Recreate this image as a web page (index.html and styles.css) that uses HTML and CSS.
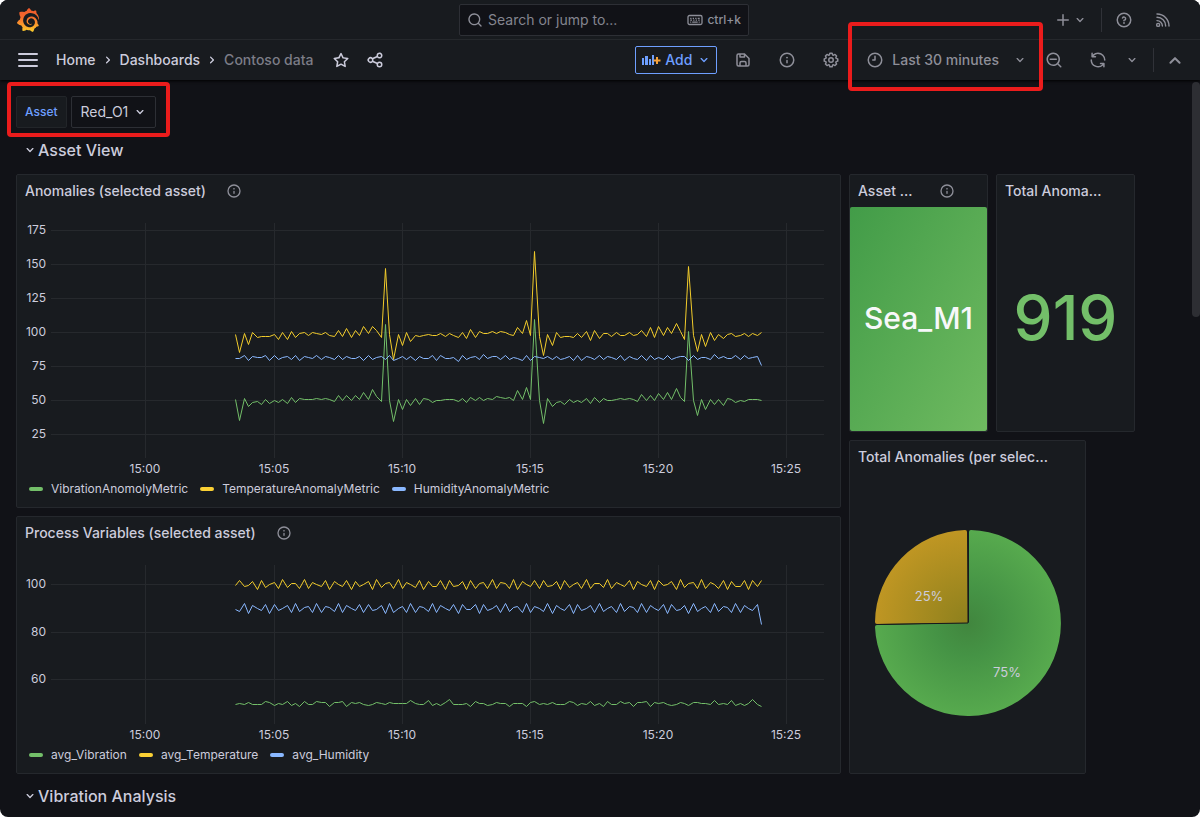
FILE: index.html
```html
<!DOCTYPE html>
<html lang="en">
<head>
<meta charset="utf-8">
<meta name="viewport" content="width=device-width, initial-scale=1">
<title>Contoso data - Dashboards - Grafana</title>
<link rel="stylesheet" href="styles.css">
</head>
<body>
<svg class="sprite" aria-hidden="true">
  <symbol id="i-down" viewBox="0 0 24 24"><path d="M17,9.17a1,1,0,0,0-1.41,0L12,12.71,8.46,9.17a1,1,0,0,0-1.41,0,1,1,0,0,0,0,1.42l4.24,4.24a1,1,0,0,0,1.42,0L17,10.59A1,1,0,0,0,17,9.17Z"/></symbol>
  <symbol id="i-right" viewBox="0 0 24 24"><path transform="rotate(-90 12 12)" d="M17,9.17a1,1,0,0,0-1.41,0L12,12.71,8.46,9.17a1,1,0,0,0-1.41,0,1,1,0,0,0,0,1.42l4.24,4.24a1,1,0,0,0,1.42,0L17,10.59A1,1,0,0,0,17,9.17Z"/></symbol>
  <symbol id="i-up" viewBox="0 0 24 24"><path d="M7 15 L12 10 L17 15" fill="none" stroke="currentColor" stroke-width="2.2" stroke-linecap="round" stroke-linejoin="round"/></symbol>
  <symbol id="i-info" viewBox="0 0 24 24"><path d="M12,2A10,10,0,1,0,22,12,10,10,0,0,0,12,2Zm0,18a8,8,0,1,1,8-8A8,8,0,0,1,12,20Zm0-8.500a1,1,0,0,0-1,1v3a1,1,0,0,0,2,0v-3A1,1,0,0,0,12,11.500Zm0-4a1.250,1.250,0,1,0,1.250,1.250A1.250,1.250,0,0,0,12,7.500Z"/></symbol>
</svg>

<div class="app">
  <header class="chrome">
    <div class="topbar">
      <a class="logo" href="#" aria-label="Grafana home">
        <svg width="24" height="24" viewBox="0 0 24 24" aria-hidden="true">
          <defs><linearGradient id="logo-fill" x1="0" y1="24" x2="0" y2="0" gradientUnits="userSpaceOnUse"><stop offset="0" stop-color="#fcd02b"/><stop offset=".3" stop-color="#fa9b2c"/><stop offset=".65" stop-color="#f4672d"/><stop offset="1" stop-color="#f05a2b"/></linearGradient></defs>
          <path fill="url(#logo-fill)" d="M23.02 10.59a8.578 8.578 0 0 0-.862-3.034 8.911 8.911 0 0 0-1.789-2.445c.337-1.342-.413-2.505-.413-2.505-1.292-.08-2.113.4-2.416.62-.052-.02-.102-.044-.154-.064-.22-.089-.446-.172-.677-.247-.231-.073-.47-.14-.711-.197a9.867 9.867 0 0 0-.875-.161C14.557.753 12.94 0 12.94 0c-1.804 1.145-2.147 2.744-2.147 2.744l-.018.093c-.098.029-.2.057-.298.088-.138.042-.275.094-.413.143-.138.055-.275.107-.41.166a8.869 8.869 0 0 0-1.557.87l-.063-.029c-2.497-.955-4.716.195-4.716.195-.203 2.658.996 4.33 1.235 4.636a11.608 11.608 0 0 0-.607 2.635C1.636 12.677.953 15.014.953 15.014c1.926 2.214 4.171 2.351 4.171 2.351.003-.002.006-.002.006-.005.285.509.615.994.986 1.446.156.19.32.371.488.548-.704 2.009.099 3.68.099 3.68 2.144.08 3.553-.937 3.849-1.173a9.784 9.784 0 0 0 3.164.501h.08l.055-.003.107-.002.103-.005.003.002c1.01 1.44 2.788 1.646 2.788 1.646 1.264-1.332 1.337-2.653 1.337-2.94v-.058c0-.02-.003-.039-.003-.06.265-.187.52-.387.758-.6a7.875 7.875 0 0 0 1.415-1.7c1.43.083 2.437-.885 2.437-.885-.236-1.49-1.085-2.216-1.264-2.354l-.018-.013-.016-.013a.217.217 0 0 1-.031-.02c.008-.092.016-.18.02-.27.011-.162.016-.323.016-.48v-.253l-.005-.098-.008-.135a1.891 1.891 0 0 0-.01-.13c-.003-.042-.008-.083-.013-.125l-.016-.124-.018-.122a6.215 6.215 0 0 0-2.032-3.73 6.015 6.015 0 0 0-3.222-1.46 6.292 6.292 0 0 0-.85-.048l-.107.002h-.063l-.044.003-.104.008a4.777 4.777 0 0 0-3.335 1.695c-.332.4-.592.84-.768 1.297a4.594 4.594 0 0 0-.312 1.817l.003.091c.005.055.007.11.013.164a3.615 3.615 0 0 0 .698 1.82 3.53 3.53 0 0 0 1.827 1.282c.33.098.66.14.971.137.039 0 .078 0 .114-.002l.063-.003c.02 0 .041-.003.062-.003.034-.002.065-.007.099-.01.007 0 .018-.003.028-.003l.031-.005.06-.008a1.18 1.18 0 0 0 .112-.02c.036-.008.072-.013.109-.024a2.634 2.634 0 0 0 .914-.415c.028-.02.056-.041.085-.065a.248.248 0 0 0 .039-.35.244.244 0 0 0-.309-.06l-.078.042c-.09.044-.184.083-.283.116a2.476 2.476 0 0 1-.475.096c-.028.003-.054.006-.083.006l-.083.002c-.026 0-.054 0-.08-.002l-.102-.006h-.012l-.024.006c-.016-.003-.031-.003-.044-.006-.031-.002-.06-.007-.091-.01a2.59 2.59 0 0 1-.724-.213 2.557 2.557 0 0 1-.667-.438 2.52 2.52 0 0 1-.805-1.475 2.306 2.306 0 0 1-.029-.444l.006-.122v-.023l.002-.031c.003-.021.003-.04.005-.06a3.163 3.163 0 0 1 1.352-2.29 3.12 3.12 0 0 1 .937-.43 2.946 2.946 0 0 1 .776-.101h.06l.07.002.045.003h.026l.07.005a4.041 4.041 0 0 1 1.635.49 3.94 3.94 0 0 1 1.602 1.662 3.77 3.77 0 0 1 .397 1.414l.005.076.003.075c.002.026.002.05.002.075 0 .024.003.052 0 .07v.065l-.002.073-.008.174a6.195 6.195 0 0 1-.08.639 5.1 5.1 0 0 1-.267.927 5.31 5.31 0 0 1-.624 1.13 5.052 5.052 0 0 1-3.237 2.014 4.82 4.82 0 0 1-.649.066l-.039.003h-.287a6.607 6.607 0 0 1-1.716-.265 6.776 6.776 0 0 1-3.4-2.274 6.75 6.75 0 0 1-.746-1.15 6.616 6.616 0 0 1-.714-2.596l-.005-.083-.002-.02v-.056l-.003-.073v-.096l-.003-.104v-.07l.003-.163c.008-.22.026-.45.054-.678a8.707 8.707 0 0 1 .28-1.355c.128-.444.286-.872.473-1.277a7.04 7.04 0 0 1 1.456-2.1 5.925 5.925 0 0 1 .953-.763c.169-.111.343-.213.524-.306.089-.05.182-.091.273-.135.047-.02.093-.042.138-.062a7.177 7.177 0 0 1 .714-.267l.145-.045c.049-.015.098-.026.148-.041.098-.029.197-.052.296-.076.049-.013.1-.02.15-.033l.15-.032.151-.028.076-.013.075-.01.153-.024c.057-.01.114-.013.171-.023l.169-.021c.036-.003.073-.008.106-.01l.073-.008.036-.003.042-.002c.057-.003.114-.008.171-.01l.086-.006h.023l.037-.003.145-.007a7.999 7.999 0 0 1 1.708.125 7.917 7.917 0 0 1 2.048.68 8.253 8.253 0 0 1 1.672 1.09l.09.077.089.078c.06.052.114.107.171.159.057.052.112.106.166.16.052.055.107.107.159.164a8.671 8.671 0 0 1 1.41 1.978c.012.026.028.052.04.078l.04.078.075.156c.023.051.05.1.07.153l.065.15a8.848 8.848 0 0 1 .45 1.34.19.19 0 0 0 .201.142.186.186 0 0 0 .172-.184c.01-.246.002-.532-.024-.856z"/>
        </svg>
      </a>
      <label class="search">
        <svg class="icon" viewBox="0 0 24 24" aria-hidden="true"><path d="M21.710,20.290,18,16.610A9,9,0,1,0,16.610,18l3.680,3.680a1,1,0,0,0,1.420,0A1,1,0,0,0,21.710,20.290ZM11,18a7,7,0,1,1,7-7A7,7,0,0,1,11,18Z"/></svg>
        <input class="search-input" type="text" placeholder="Search or jump to..." aria-label="Search or jump to">
        <svg class="icon" viewBox="0 0 16 16" aria-hidden="true"><g fill="none" stroke="currentColor"><rect x="1" y="3.500" width="14" height="9" rx="1.500" stroke-width="1.300"/><path d="M3.200 6.300h1.300M5.700 6.300H7M8.200 6.300h1.300M10.700 6.300h2M3.200 8.200h1.800M6.200 8.200h1.300M8.700 8.200H10M11.200 8.200h1.500M3.200 10.200h1M5.200 10.200h5.500M11.700 10.200h1" stroke-width="1.200"/></g></svg>
        <kbd class="kbd">ctrl+k</kbd>
      </label>
      <div class="top-actions">
        <button class="new-button" type="button" aria-label="New">
          <svg class="icon icon-md" viewBox="0 0 24 24" aria-hidden="true"><path d="M19,11H13V5a1,1,0,0,0-2,0v6H5a1,1,0,0,0,0,2h6v6a1,1,0,0,0,2,0V13h6a1,1,0,0,0,0-2Z"/></svg>
          <svg class="icon" viewBox="0 0 24 24" aria-hidden="true"><use href="#i-down"/></svg>
        </button>
        <span class="divider"></span>
        <button class="top-button" type="button" aria-label="Help"><svg class="icon icon-md" viewBox="0 0 24 24" aria-hidden="true"><g fill="none" stroke="currentColor" stroke-width="2" stroke-linecap="round"><circle cx="12" cy="12" r="9"/><path d="M10 9.300a2.200 2.200 0 1 1 2 3.200v.5"/></g><circle cx="12" cy="16" r="1.200"/></svg></button>
        <button class="top-button" type="button" aria-label="News"><svg class="icon icon-md" viewBox="0 0 24 24" aria-hidden="true"><g fill="none" stroke="currentColor" stroke-width="1.900" stroke-linecap="round"><circle cx="5.500" cy="18.500" r="2"/><path d="M4 12.800A7.300 7.300 0 0 1 11.200 20M4 8.400A11.600 11.600 0 0 1 15.600 20M4 4A16 16 0 0 1 20 20"/></g></svg></button>
      </div>
    </div>

    <div class="toolbar">
      <button class="menu-button" type="button" aria-label="Open menu"><span></span><span></span><span></span></button>
      <nav class="crumbs" aria-label="Breadcrumbs">
        <a href="#">Home</a>
        <svg class="icon" viewBox="0 0 24 24" aria-hidden="true"><use href="#i-right"/></svg>
        <a href="#">Dashboards</a>
        <svg class="icon" viewBox="0 0 24 24" aria-hidden="true"><use href="#i-right"/></svg>
        <span class="crumb-current">Contoso data</span>
      </nav>
      <div class="crumb-actions">
        <button class="plain-button" type="button" aria-label="Mark as favorite"><svg class="icon icon-md" viewBox="0 0 24 24" aria-hidden="true"><path d="M22,9.67A1,1,0,0,0,21.14,9l-5.69-.83L12.9,3a1,1,0,0,0-1.8,0L8.55,8.16,2.86,9a1,1,0,0,0-.81.68,1,1,0,0,0,.25,1l4.13,4-1,5.68A1,1,0,0,0,6.9,21.44L12,18.77l5.1,2.67a.93.93,0,0,0,.46.12,1,1,0,0,0,.59-.19,1,1,0,0,0,.4-1l-1-5.68,4.13-4A1,1,0,0,0,22,9.67Zm-6.15,4a1,1,0,0,0-.29.88l.72,4.2-3.76-2a1.06,1.06,0,0,0-.94,0l-3.76,2,.72-4.2a1,1,0,0,0-.29-.88l-3-3,4.21-.61a1,1,0,0,0,.76-.55L12,5.7l1.88,3.82a1,1,0,0,0,.76.55l4.21.61Z"/></svg></button>
        <button class="plain-button" type="button" aria-label="Share dashboard"><svg class="icon icon-md" viewBox="0 0 24 24" aria-hidden="true"><path d="M18,14a4,4,0,0,0-3.08,1.48l-5.1-2.35a3.64,3.64,0,0,0,0-2.26l5.1-2.35A4,4,0,1,0,14,6a4.17,4.17,0,0,0,.07.71L8.79,9.14a4,4,0,1,0,0,5.72l5.28,2.43A4.17,4.17,0,0,0,14,18a4,4,0,1,0,4-4ZM18,4a2,2,0,1,1-2,2A2,2,0,0,1,18,4ZM6,14a2,2,0,1,1,2-2A2,2,0,0,1,6,14Zm12,6a2,2,0,1,1,2-2A2,2,0,0,1,18,20Z"/></svg></button>
      </div>

      <div class="tools">
        <button class="add-button" type="button">
          <svg width="20" height="16" viewBox="0 0 20 16" aria-hidden="true"><g fill="#6e9fff"><rect x="1" y="6" width="2" height="7"/><rect x="4" y="4" width="3" height="9"/><rect x="8" y="7" width="2" height="6"/><rect x="11" y="3" width="2" height="10"/></g><path d="M16 5v7M12.500 8.500h7" stroke="#f5a13a" stroke-width="2" fill="none"/></svg>
          <span>Add</span>
          <svg class="icon" viewBox="0 0 24 24" aria-hidden="true"><use href="#i-down"/></svg>
        </button>
        <button class="tool-button" type="button" aria-label="Save dashboard"><svg class="icon icon-md" viewBox="0 0 24 24" aria-hidden="true"><path d="M20.71,9.29l-6-6a1,1,0,0,0-.32-.21A1.09,1.09,0,0,0,14,3H6A3,3,0,0,0,3,6V18a3,3,0,0,0,3,3H18a3,3,0,0,0,3-3V10A1,1,0,0,0,20.71,9.29ZM9,5h4V7H9Zm6,14H9V16a1,1,0,0,1,1-1h4a1,1,0,0,1,1,1Zm4-1a1,1,0,0,1-1,1H17V16a3,3,0,0,0-3-3H10a3,3,0,0,0-3,3v3H6a1,1,0,0,1-1-1V6A1,1,0,0,1,6,5H7V8A1,1,0,0,0,8,9h6a1,1,0,0,0,1-1V6.41l4,4Z"/></svg></button>
        <button class="tool-button" type="button" aria-label="Dashboard insights"><svg class="icon icon-md" viewBox="0 0 24 24" aria-hidden="true"><use href="#i-info"/></svg></button>
        <button class="tool-button" type="button" aria-label="Dashboard settings"><svg class="icon icon-md" viewBox="0 0 24 24" aria-hidden="true"><path d="M21.32,9.55l-1.89-.63.89-1.78A1,1,0,0,0,20.13,6L18,3.87a1,1,0,0,0-1.15-.19l-1.78.89-.63-1.89A1,1,0,0,0,13.5,2h-3a1,1,0,0,0-.95.68L8.92,4.57,7.14,3.68A1,1,0,0,0,6,3.87L3.87,6a1,1,0,0,0-.19,1.15l.89,1.78-1.89.63A1,1,0,0,0,2,10.5v3a1,1,0,0,0,.68.95l1.89.63-.89,1.78A1,1,0,0,0,3.87,18L6,20.13a1,1,0,0,0,1.15.19l1.78-.89.63,1.89a1,1,0,0,0,.95.68h3a1,1,0,0,0,.95-.68l.63-1.89,1.78.89A1,1,0,0,0,18,20.13L20.13,18a1,1,0,0,0,.19-1.15l-.89-1.78,1.89-.63A1,1,0,0,0,22,13.5v-3A1,1,0,0,0,21.32,9.55ZM20,12.78l-1.2.4A2,2,0,0,0,17.64,16l.57,1.14-1.1,1.1L16,17.64a2,2,0,0,0-2.79,1.16l-.4,1.2H11.22l-.4-1.2A2,2,0,0,0,8,17.64l-1.14.57-1.1-1.1L6.36,16A2,2,0,0,0,5.2,13.18L4,12.78V11.22l1.2-.4A2,2,0,0,0,6.36,8L5.79,6.89l1.1-1.1L8,6.36A2,2,0,0,0,10.82,5.2l.4-1.2h1.56l.4,1.2A2,2,0,0,0,16,6.36l1.14-.57,1.1,1.1L17.64,8a2,2,0,0,0,1.16,2.79l1.2.4ZM12,8a4,4,0,1,0,4,4A4,4,0,0,0,12,8Zm0,6a2,2,0,1,1,2-2A2,2,0,0,1,12,14Z"/></svg></button>
        <div class="marked marked-time">
          <button class="time-button" type="button">
            <svg class="icon icon-md" viewBox="0 0 24 24" aria-hidden="true"><path d="M12,2A10,10,0,1,0,22,12,10,10,0,0,0,12,2Zm0,18a8,8,0,1,1,8-8A8,8,0,0,1,12,20ZM12,6a1,1,0,0,0-1,1v4H9a1,1,0,0,0,0,2h3a1,1,0,0,0,1-1V7A1,1,0,0,0,12,6Z"/></svg>
            <span class="time-text">Last 30 minutes</span>
            <svg class="icon" viewBox="0 0 24 24" aria-hidden="true"><use href="#i-down"/></svg>
          </button>
        </div>
        <button class="tool-button zoom-button" type="button" aria-label="Zoom out time range"><svg class="icon icon-md" viewBox="0 0 24 24" aria-hidden="true"><path d="M21.710,20.290,18,16.610A9,9,0,1,0,16.610,18l3.680,3.680a1,1,0,0,0,1.420,0A1,1,0,0,0,21.710,20.290ZM11,18a7,7,0,1,1,7-7A7,7,0,0,1,11,18Zm4-8H7a1,1,0,0,0,0,2h8a1,1,0,0,0,0-2Z"/></svg></button>
        <button class="tool-button" type="button" aria-label="Refresh dashboard"><svg class="icon icon-md" viewBox="0 0 24 24" aria-hidden="true"><path d="M19.91,15.51H15.38a1,1,0,0,0,0,2h2.4A8,8,0,0,1,4,12a1,1,0,1,0-2,0,10,10,0,0,0,16.88,7.23V21a1,1,0,0,0,2,0V16.5A1,1,0,0,0,19.91,15.51ZM12,2A10,10,0,0,0,5.12,4.77V3a1,1,0,0,0-2,0V7.5a1,1,0,0,0,1,1h4.5a1,1,0,0,0,0-2H6.22A8,8,0,0,1,20,12a1,1,0,0,0,2,0A10,10,0,0,0,12,2Z"/></svg></button>
        <button class="narrow-button" type="button" aria-label="Auto refresh interval"><svg class="icon" viewBox="0 0 24 24" aria-hidden="true"><use href="#i-down"/></svg></button>
        <span class="divider"></span>
        <button class="narrow-button" type="button" aria-label="Collapse top bar"><svg class="icon icon-lg" viewBox="0 0 24 24" aria-hidden="true"><use href="#i-up"/></svg></button>
      </div>
    </div>
  </header>

  <main class="dashboard">
    <div class="marked marked-variable">
      <label class="variable-label" for="asset">Asset</label>
      <div class="variable-select">
        <select id="asset"><option>Red_O1</option></select>
        <svg class="icon" viewBox="0 0 24 24" aria-hidden="true"><use href="#i-down"/></svg>
      </div>
    </div>

    <div class="grid">
      <h2 class="row-title row-first"><button type="button"><svg class="icon" viewBox="0 0 24 24" aria-hidden="true"><use href="#i-down"/></svg>Asset View</button></h2>

      <section class="panel panel-anomalies">
        <header class="panel-header"><h3>Anomalies (selected asset)</h3><svg class="icon" viewBox="0 0 24 24" aria-hidden="true"><use href="#i-info"/></svg></header>
        <svg class="chart" id="anomalies" viewBox="17 207 823 270" role="img" aria-label="Anomaly metrics over time">
          <g class="chart-grid">
            <path d="M51 230.500H824M51 264.500H824M51 298.500H824M51 332.500H824M51 366.500H824M51 400.500H824M51 434.500H824"/>
            <path d="M145.500 223V458M274.500 223V458M402.500 223V458M530.500 223V458M658.500 223V458M786.500 223V458"/>
          </g>
          <g class="chart-y"><text x="46" y="234">175</text><text x="46" y="268">150</text><text x="46" y="302">125</text><text x="46" y="336">100</text><text x="46" y="370">75</text><text x="46" y="404">50</text><text x="46" y="438">25</text></g>
          <g class="chart-x"><text x="145" y="473">15:00</text><text x="274" y="473">15:05</text><text x="402" y="473">15:10</text><text x="530" y="473">15:15</text><text x="658" y="473">15:20</text><text x="786" y="473">15:25</text></g>
        </svg>
        <ul class="legend">
          <li class="green">VibrationAnomolyMetric</li>
          <li class="yellow">TemperatureAnomalyMetric</li>
          <li class="blue">HumidityAnomalyMetric</li>
        </ul>
      </section>

      <section class="panel panel-asset">
        <header class="panel-header panel-header-spread"><h3>Asset ...</h3><svg class="icon" viewBox="0 0 24 24" aria-hidden="true"><use href="#i-info"/></svg></header>
        <div class="stat stat-filled">Sea_M1</div>
      </section>

      <section class="panel panel-total">
        <header class="panel-header"><h3>Total Anoma...</h3></header>
        <div class="stat stat-number">919</div>
      </section>

      <section class="panel panel-process">
        <header class="panel-header"><h3>Process Variables (selected asset)</h3><svg class="icon" viewBox="0 0 24 24" aria-hidden="true"><use href="#i-info"/></svg></header>
        <svg class="chart" id="process" viewBox="17 549 823 194" role="img" aria-label="Process variables over time">
          <g class="chart-grid">
            <path d="M51 584.500H824M51 632.500H824M51 679.500H824"/>
            <path d="M145.500 565V724M274.500 565V724M402.500 565V724M530.500 565V724M658.500 565V724M786.500 565V724"/>
          </g>
          <g class="chart-y"><text x="46" y="588">100</text><text x="46" y="636">80</text><text x="46" y="683">60</text></g>
          <g class="chart-x"><text x="145" y="739">15:00</text><text x="274" y="739">15:05</text><text x="402" y="739">15:10</text><text x="530" y="739">15:15</text><text x="658" y="739">15:20</text><text x="786" y="739">15:25</text></g>
        </svg>
        <ul class="legend">
          <li class="green">avg_Vibration</li>
          <li class="yellow">avg_Temperature</li>
          <li class="blue">avg_Humidity</li>
        </ul>
      </section>

      <section class="panel panel-pie">
        <header class="panel-header"><h3>Total Anomalies (per selec...</h3></header>
        <svg class="chart" viewBox="-118 -150 235 300" role="img" aria-label="75% and 25%">
          <defs>
            <radialGradient id="pie-green" gradientUnits="userSpaceOnUse" cx="0" cy="0" r="93"><stop offset="0" stop-color="#41863e"/><stop offset=".35" stop-color="#459345"/><stop offset="1" stop-color="#57aa4e"/></radialGradient>
            <radialGradient id="pie-yellow" gradientUnits="userSpaceOnUse" cx="0" cy="0" r="93"><stop offset="0" stop-color="#8d801d"/><stop offset="1" stop-color="#bf9623"/></radialGradient>
          </defs>
          <path fill="url(#pie-green)" d="M1 -1V-91Q1 -93 3 -93A93 93 0 1 1 -93 4Q-93 2 -91 2L0 0Z"/>
          <path fill="url(#pie-yellow)" d="M0 0L-1 -91Q-1 -93 -3 -93A93 93 0 0 0 -93 -1Q-93 1 -91 1Z"/>
          <path d="M0 -93V0L-93 1.500" fill="none" stroke="#15181c" stroke-width="1"/>
          <g class="pie-labels"><text x="-39" y="-22">25%</text><text x="39" y="54">75%</text></g>
        </svg>
      </section>

      <h2 class="row-title row-last"><button type="button"><svg class="icon" viewBox="0 0 24 24" aria-hidden="true"><use href="#i-down"/></svg>Vibration Analysis</button></h2>
    </div>
  </main>
  <div class="scroll-thumb"></div>
</div>
<script src="charts.js"></script>
</body>
</html>
```
FILE: styles.css
```css
* { box-sizing: border-box; }

html { background: #fff; }

body {
  margin: 0;
  font-family: Inter, "Liberation Sans", sans-serif;
  font-size: 14px;
  line-height: 22px;
  color: #ccccdc;
}

button, input, select { font: inherit; color: inherit; margin: 0; }

button {
  display: flex;
  align-items: center;
  padding: 0;
  border: 0;
  background: none;
  cursor: pointer;
}

a { color: inherit; text-decoration: none; }
h2, h3 { margin: 0; font-weight: 500; }

.sprite { position: absolute; width: 0; height: 0; }
.icon { flex: none; width: 16px; height: 16px; fill: currentColor; }
.icon-md { width: 18px; height: 18px; }
.icon-lg { width: 22px; height: 22px; }

.app {
  position: relative;
  min-height: 100vh;
  border-radius: 8px;
  overflow: hidden;
  background: #111217;
}

.chrome {
  position: relative;
  background: #181b1f;
  box-shadow: 0 1px 3px #000;
}

.topbar {
  display: grid;
  grid-template-columns: minmax(0, 3fr) minmax(0, 2fr) minmax(0, 3fr);
  gap: 8px;
  align-items: center;
  height: 40px;
  padding: 0 8px 0 16px;
  border-bottom: 1px solid #25282c;
}

.logo { display: flex; }

.search {
  display: flex;
  align-items: center;
  height: 32px;
  padding: 0 7px;
  border: 1px solid #2d2f35;
  border-radius: 2px;
  background: #111217;
  color: #8e8f99;
}

.search-input {
  flex: 1;
  min-width: 0;
  padding: 0 5px;
  border: 0;
  outline: 0;
  background: none;
}

.search-input::placeholder { color: #84858f; opacity: 1; }
.kbd { padding-left: 4px; font: 500 12px/18px Inter, sans-serif; }

.top-actions {
  display: flex;
  align-items: center;
  justify-content: flex-end;
  padding-right: 17px;
  color: #8e8f99;
}

.new-button { margin-right: 13px; }
.top-button { justify-content: center; width: 24px; height: 32px; margin-left: 15px; }
.divider { width: 1px; height: 24px; background: #303238; }
.divider + .top-button { margin-left: 10px; }

.toolbar { display: flex; align-items: center; height: 40px; padding: 0 17px 0 18px; }
.menu-button { flex-direction: column; gap: 4px; width: 20px; }
.menu-button span { width: 20px; height: 2px; border-radius: 1px; background: #ccccdc; }

.crumbs { display: flex; align-items: center; gap: 4px; margin-left: 18px; font-weight: 500; white-space: nowrap; }
.crumb-current { color: #7c7d87; }
.crumb-actions { display: flex; gap: 16px; margin-left: 19px; }

.tools { display: flex; align-items: center; margin-left: auto; color: #8e8f99; }

.add-button {
  gap: 4px;
  height: 28px;
  margin-right: 10px;
  padding: 0 4px 0 5px;
  border: 1px solid #6e9fff;
  border-radius: 2px;
  color: #6e9fff;
  font-weight: 500;
}

.tool-button { justify-content: center; width: 32px; height: 32px; margin-right: 12px; }
.narrow-button { justify-content: center; width: 16px; height: 32px; }
.tools .divider { margin: 0 13px; }
.zoom-button { margin-left: 2px; }
.tool-button + .narrow-button { margin-left: -2px; }

.time-button { gap: 8px; height: 32px; padding: 0 8px 0 7px; font-weight: 500; white-space: nowrap; }
.time-text { padding-right: 5px; }

.marked { position: relative; }

.marked::after {
  content: "";
  position: absolute;
  z-index: 2;
  border: 4px solid #eb1c1c;
  border-radius: 4px;
  pointer-events: none;
}

.marked-time::after { inset: -22px -7px -15px -11px; }
.marked-variable::after { inset: -14px -14px -9px -9px; }

.dashboard { padding: 16px 16px 4px; }

.marked-variable { display: flex; gap: 4px; width: max-content; margin-bottom: 8px; }

.variable-label {
  height: 32px;
  padding: 0 8px;
  border: 1px solid #222529;
  border-radius: 2px;
  background: #181b1f;
  color: #6e9fff;
  font-size: 12px;
  font-weight: 500;
  line-height: 30px;
}

.variable-select { display: flex; align-items: center; position: relative; }

.variable-select select {
  appearance: none;
  height: 32px;
  padding: 0 26px 0 9px;
  border: 1px solid #2d2f35;
  border-radius: 2px;
  background: #111217;
}

.variable-select .icon { position: absolute; right: 8px; pointer-events: none; }

.grid {
  display: grid;
  grid-template-columns: repeat(24, minmax(0, 1fr));
  grid-auto-rows: minmax(30px, auto);
  gap: 8px;
}

.row-title { grid-column: 1 / -1; font-size: 16px; line-height: 28px; }
.row-title button { padding-left: 6px; }
.row-first { grid-row: 1; }
.row-last { grid-row: 18; }

.panel {
  display: flex;
  flex-direction: column;
  min-width: 0;
  border: 1px solid #25282d;
  border-radius: 2px;
  background: #181b1f;
}

.panel-anomalies { grid-area: 2 / 1 / span 9 / span 17; }
.panel-process { grid-area: 11 / 1 / span 7 / span 17; }
.panel-asset { grid-area: 2 / 18 / span 7 / span 3; }
.panel-total { grid-area: 2 / 21 / span 7 / span 3; }
.panel-pie { grid-area: 9 / 18 / span 9 / span 5; }

.panel-header { display: flex; align-items: center; gap: 20px; height: 32px; padding: 0 8px; }
.panel-header h3 { font-size: 14px; line-height: 22px; white-space: nowrap; overflow: hidden; }
.panel-header .icon { color: #8e8f99; }
.panel-header-spread { justify-content: space-between; padding-right: 32px; }

.chart { display: block; width: 100%; height: auto; }
.chart-grid path { fill: none; stroke: #26292d; stroke-width: 1; }
.chart text { fill: #ccccdc; font-size: 12px; }
.chart-y text { text-anchor: end; }
.chart-x text, .pie-labels text { text-anchor: middle; }
.chart .pie-labels text { font-size: 13px; }
.series { fill: none; stroke-width: 1; stroke-linejoin: round; }
.series-green { stroke: #73bf69; }
.series-yellow { stroke: #f2cc2b; }
.series-blue { stroke: #8ab8ff; }

.legend {
  display: flex;
  flex-wrap: wrap;
  gap: 12px;
  margin: 0;
  padding: 0 12px;
  list-style: none;
  font-size: 12px;
  line-height: 24px;
}

.legend li { display: flex; align-items: center; gap: 8px; }
.legend li::before { content: ""; width: 14px; height: 4px; border-radius: 2px; background: currentColor; }
.legend .green::before { background: #73bf69; }
.legend .yellow::before { background: #fad034; }
.legend .blue::before { background: #8ab8ff; }

.stat { display: flex; flex: 1; align-items: center; justify-content: center; padding-bottom: 3px; font-weight: 500; }
.stat-filled { border-radius: 2px; background: linear-gradient(120deg, #429c48, #6fba60); color: #f7f8fa; font-size: 30px; }
.stat-number { color: #73bf69; font-size: 62px; }

.scroll-thumb {
  position: absolute;
  top: 82px;
  right: 0;
  width: 8px;
  height: 235px;
  border-radius: 4px;
  background: #2d2e33;
}
```
FILE: charts.js
```js
// One sample every ten seconds; heights are in thirds of a chart unit below `top`.
const charts = {
  anomalies: {
    top: 170,
    green: [688,751,686,709,697,694,703,688,700,691,697,688,700,682,697,685,688,688,688,685,688,685,689,694,677,691,677,691,677,688,668,688,658,680,694,463,691,754,688,718,688,706,685,703,685,689,697,691,691,688,688,688,694,685,697,683,691,682,691,685,688,679,682,685,683,691,661,688,653,688,448,690,760,686,709,698,694,703,688,697,691,697,685,700,682,697,685,691,691,687,685,688,685,689,694,673,691,676,691,670,688,667,688,656,681,694,484,691,737,689,718,689,703,688,706,685,688,697,691,694,688,688,688,691],
    yellow: [493,547,490,523,488,501,499,499,499,493,508,488,508,485,502,490,488,496,487,490,493,487,496,499,482,499,475,502,482,496,470,490,470,482,502,295,493,567,493,526,488,514,496,499,495,493,497,496,490,498,490,496,502,488,505,479,501,485,491,490,485,489,485,487,492,496,472,490,452,496,244,498,556,494,526,488,501,499,499,501,490,501,485,511,482,505,491,490,499,488,496,496,487,496,493,481,499,473,502,470,495,473,490,461,484,508,289,496,544,494,529,487,511,494,505,493,491,499,495,490,499,490,496,488],
    blue: [566,565,557,571,560,562,562,557,571,557,569,562,560,568,557,571,560,562,565,557,568,560,563,568,557,568,560,565,565,560,571,557,568,562,560,568,557,571,565,560,568,558,571,560,565,565,557,571,557,565,565,562,574,557,569,562,560,568,554,566,560,560,568,557,568,562,565,571,557,571,560,563,565,559,568,560,568,565,560,571,557,570,560,563,568,557,568,560,562,568,557,570,560,566,568,557,570,557,568,562,569,557,568,562,560,560,571,557,568,562,562,567,554,565,560,565,565,557,569,557,565,563,560,586]
  },
  process: {
    top: 510,
    green: [584,580,583,577,583,583,583,574,577,586,580,583,574,586,580,589,574,583,583,574,578,577,589,578,577,574,589,577,580,577,583,586,584,577,580,583,578,580,580,580,581,571,580,582,583,571,585,580,585,578,568,583,583,584,580,589,574,580,581,586,583,577,580,581,589,580,580,581,589,577,574,583,580,583,577,583,583,583,574,577,585,580,583,574,585,580,589,574,583,583,574,579,578,589,577,577,574,589,577,580,577,583,586,583,577,579,586,577,577,580,580,583,571,583,580,583,571,585,580,585,580,568,583,589],
    yellow: [227,212,229,227,215,238,212,232,224,217,235,209,231,220,220,235,209,235,217,223,229,212,238,215,224,228,212,238,213,229,224,215,238,209,231,220,217,235,209,234,217,223,231,212,238,215,228,229,212,238,212,229,226,215,238,212,234,221,218,235,208,234,217,220,234,208,237,215,222,229,212,235,212,229,226,215,238,212,231,223,218,235,208,235,221,221,231,208,235,217,223,230,212,238,215,224,228,212,238,212,227,224,215,238,208,232,220,218,235,208,234,217,222,234,212,238,215,228,229,212,238,212,229,212],
    blue: [299,304,281,310,287,296,301,284,310,284,301,295,287,307,281,304,293,289,307,281,307,290,293,304,281,307,287,296,301,284,307,284,301,298,287,310,281,307,295,290,307,281,307,288,292,304,281,307,287,296,301,284,310,284,299,299,284,310,284,301,296,287,307,281,304,293,290,307,281,307,289,296,304,281,310,287,296,301,284,310,284,301,296,287,307,281,304,295,289,307,281,305,290,291,307,281,307,287,296,301,284,310,284,301,298,287,310,281,304,295,289,307,281,304,289,293,307,281,307,287,295,301,284,344]
  }
};

const START = 235.2;
const STEP = 4.275;

for (const [id, chart] of Object.entries(charts)) {
  const svg = document.getElementById(id);
  for (const name of ["green", "yellow", "blue"]) {
    const points = chart[name].map((v, i) => {
      const x = Math.round(START + STEP * i) + 0.5;
      const y = Math.floor(chart.top + v / 3) + 0.5;
      return `${x},${y}`;
    });
    const line = document.createElementNS("http://www.w3.org/2000/svg", "polyline");
    line.setAttribute("class", `series series-${name}`);
    line.setAttribute("points", points.join(" "));
    svg.append(line);
  }
}
```
